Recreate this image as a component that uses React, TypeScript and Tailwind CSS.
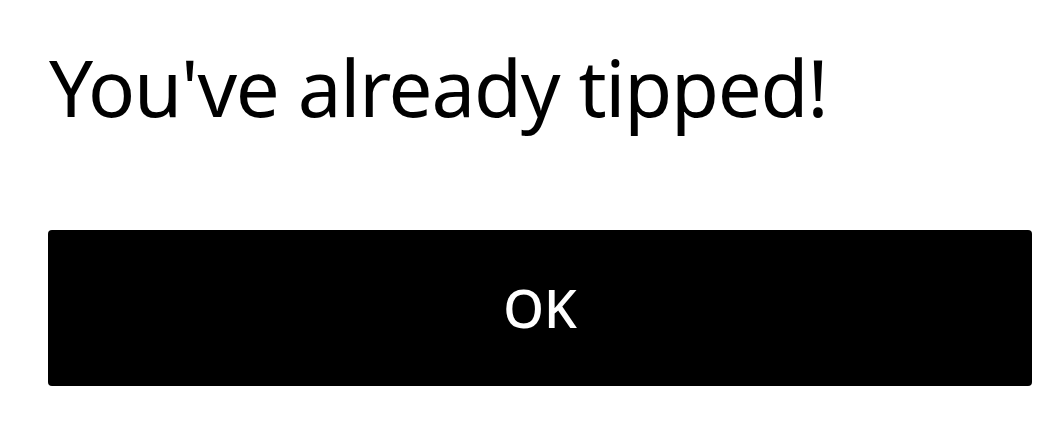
export default function App() {
  return (
    <div className="w-[1063px] h-[434px] bg-white flex flex-col pl-[48px] pr-[31px]" style={{ fontFamily: '"Noto Sans", sans-serif' }}>
      <h1 className="mt-[34px] ml-[1px] text-[78px] leading-[106px] text-black font-normal tracking-[-1.2px]">You've already tipped!</h1>
      <button className="mt-[90px] h-[156px] w-full bg-black rounded-[4px] text-white text-[52px] font-medium flex items-center justify-center">OK</button>
    </div>
  );
}
